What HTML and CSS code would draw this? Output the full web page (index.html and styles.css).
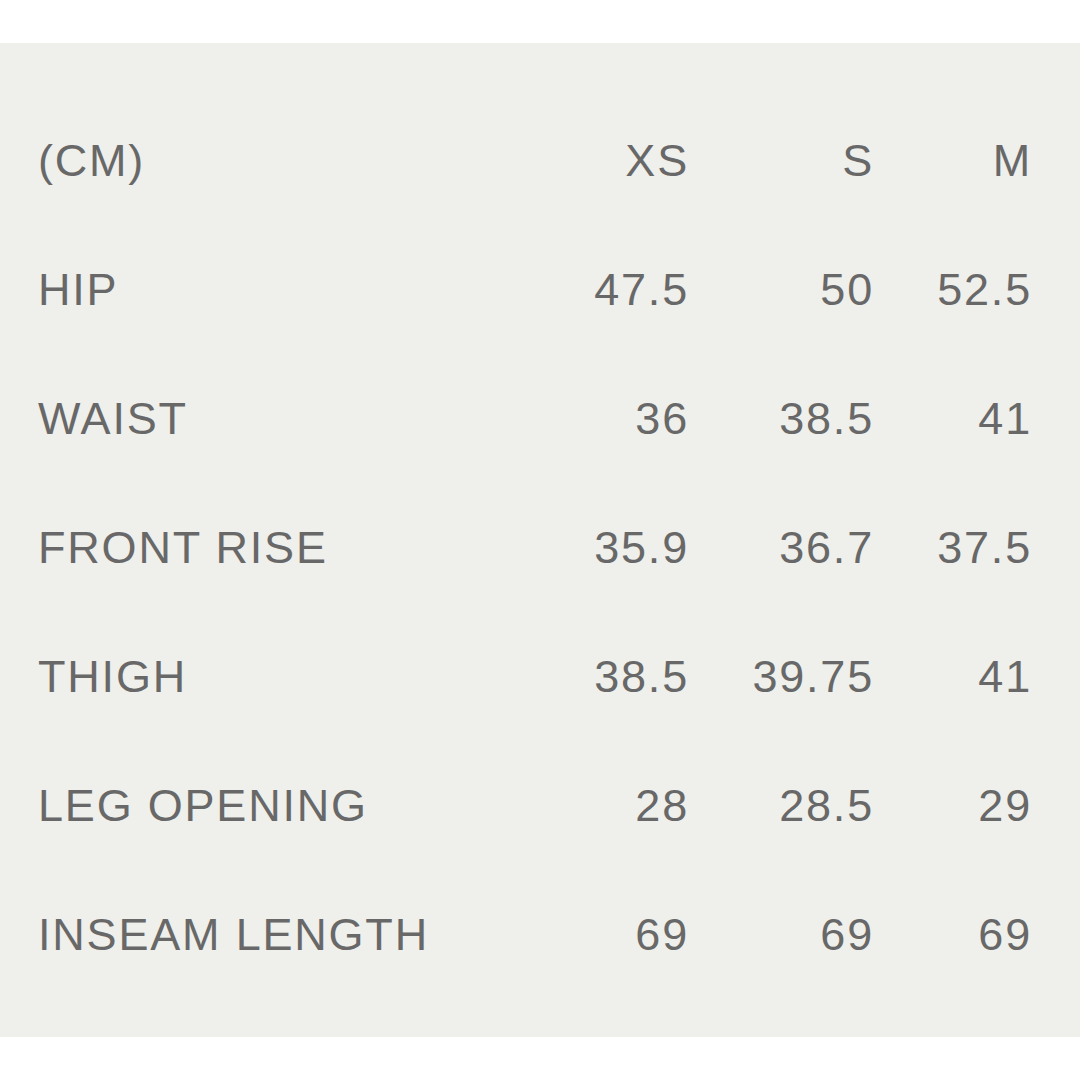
FILE: index.html
```html
<!DOCTYPE html>
<html>
<head>
<meta charset="utf-8">
<link rel="stylesheet" href="styles.css">
</head>
<body>
<div class="page">
  <div class="panel">
    <div class="table">
      <div class="row">
        <div class="label">(CM)</div><div class="cell">XS</div><div class="cell">S</div><div class="cell">M</div>
      </div>
      <div class="row">
        <div class="label">HIP</div><div class="cell">47.5</div><div class="cell">50</div><div class="cell">52.5</div>
      </div>
      <div class="row">
        <div class="label">WAIST</div><div class="cell">36</div><div class="cell">38.5</div><div class="cell">41</div>
      </div>
      <div class="row">
        <div class="label">FRONT RISE</div><div class="cell">35.9</div><div class="cell">36.7</div><div class="cell">37.5</div>
      </div>
      <div class="row">
        <div class="label">THIGH</div><div class="cell">38.5</div><div class="cell">39.75</div><div class="cell">41</div>
      </div>
      <div class="row">
        <div class="label">LEG OPENING</div><div class="cell">28</div><div class="cell">28.5</div><div class="cell">29</div>
      </div>
      <div class="row">
        <div class="label">INSEAM LENGTH</div><div class="cell">69</div><div class="cell">69</div><div class="cell">69</div>
      </div>
    </div>
  </div>
</div>
</body>
</html>
```

FILE: styles.css
```css
html, body {
  margin: 0;
  padding: 0;
  background: #ffffff;
}
.page {
  width: 1080px;
  height: 1080px;
  padding-top: 43px;
  box-sizing: border-box;
}
.panel {
  background: #efefeb;
  height: 994px;
  box-sizing: border-box;
  padding: 53px 48px 0 38px;
}
.table {
  display: flex;
  flex-direction: column;
}
.row {
  display: grid;
  grid-template-columns: 1fr 140px 185px 158px;
  height: 129px;
  line-height: 129px;
  font-family: "Liberation Sans", Arial, sans-serif;
  font-size: 45px;
  letter-spacing: 1.8px;
  color: #686868;
}
.label {
  white-space: nowrap;
}
.cell {
  text-align: right;
  white-space: nowrap;
}
```
